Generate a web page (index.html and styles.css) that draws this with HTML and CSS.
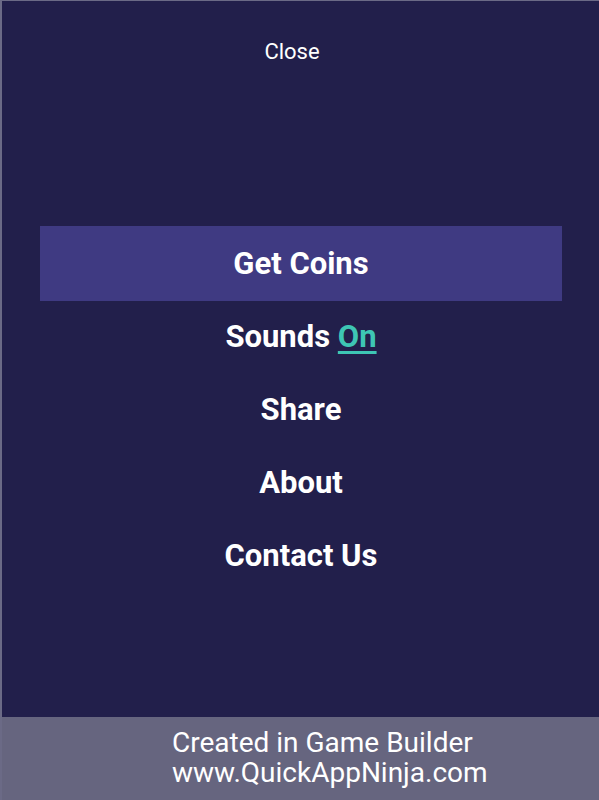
FILE: index.html
```html
<!DOCTYPE html>
<html lang="en">
<head>
    <meta charset="UTF-8">
    <meta name="viewport" content="width=device-width, initial-scale=1.0">
    <title>Menu</title>
    <link rel="stylesheet" href="styles.css">
</head>
<body>
    <div class="screen">
        <!-- top close link -->
        <div class="close-bar">Close</div>

        <!-- menu items -->
        <div class="menu">
            <div class="menu-item active">Get Coins</div>
            <div class="menu-item">Sounds <span class="toggle">On</span></div>
            <div class="menu-item">Share</div>
            <div class="menu-item">About</div>
            <div class="menu-item">Contact Us</div>
        </div>

        <!-- footer -->
        <div class="footer">
            <div class="footer-line">Created in Game Builder</div>
            <div class="footer-line">www.QuickAppNinja.com</div>
        </div>
    </div>
</body>
</html>
```

FILE: styles.css
```css
/* page */
body, html {
    margin: 0;
    padding: 0;
    font-family: Roboto, "Liberation Sans", sans-serif;
    background-color: #221f4b;
}

.screen {
    height: 800px;
    box-sizing: border-box;
    border-top: 1px solid #6b6a86;
    border-left: 2px solid #6b6a86;
    display: flex;
    flex-direction: column;
    color: #fff;
}

/* close */
.close-bar {
    text-align: center;
    font-size: 22px;
    padding-top: 38px;
    height: 187px;
    box-sizing: border-box;
    padding-right: 17px;
}

/* menu */
.menu {
    flex: 1;
    padding: 38px 37px 0 38px;
}

.menu-item {
    height: 73px;
    line-height: 72px;
    text-align: center;
    font-size: 31px;
    font-weight: bold;
}

.menu-item.active {
    background-color: #3f3a82;
    height: 75px;
    line-height: 75px;
}

.toggle {
    color: #3ec6b4;
    text-decoration: underline;
    text-underline-offset: 4px;
    text-decoration-thickness: 3px;
}

/* footer */
.footer {
    height: 83px;
    background-color: #66657f;
    padding: 11px 0 0 170px;
    box-sizing: border-box;
}

.footer-line {
    font-size: 28px;
    line-height: 30px;
}
```
